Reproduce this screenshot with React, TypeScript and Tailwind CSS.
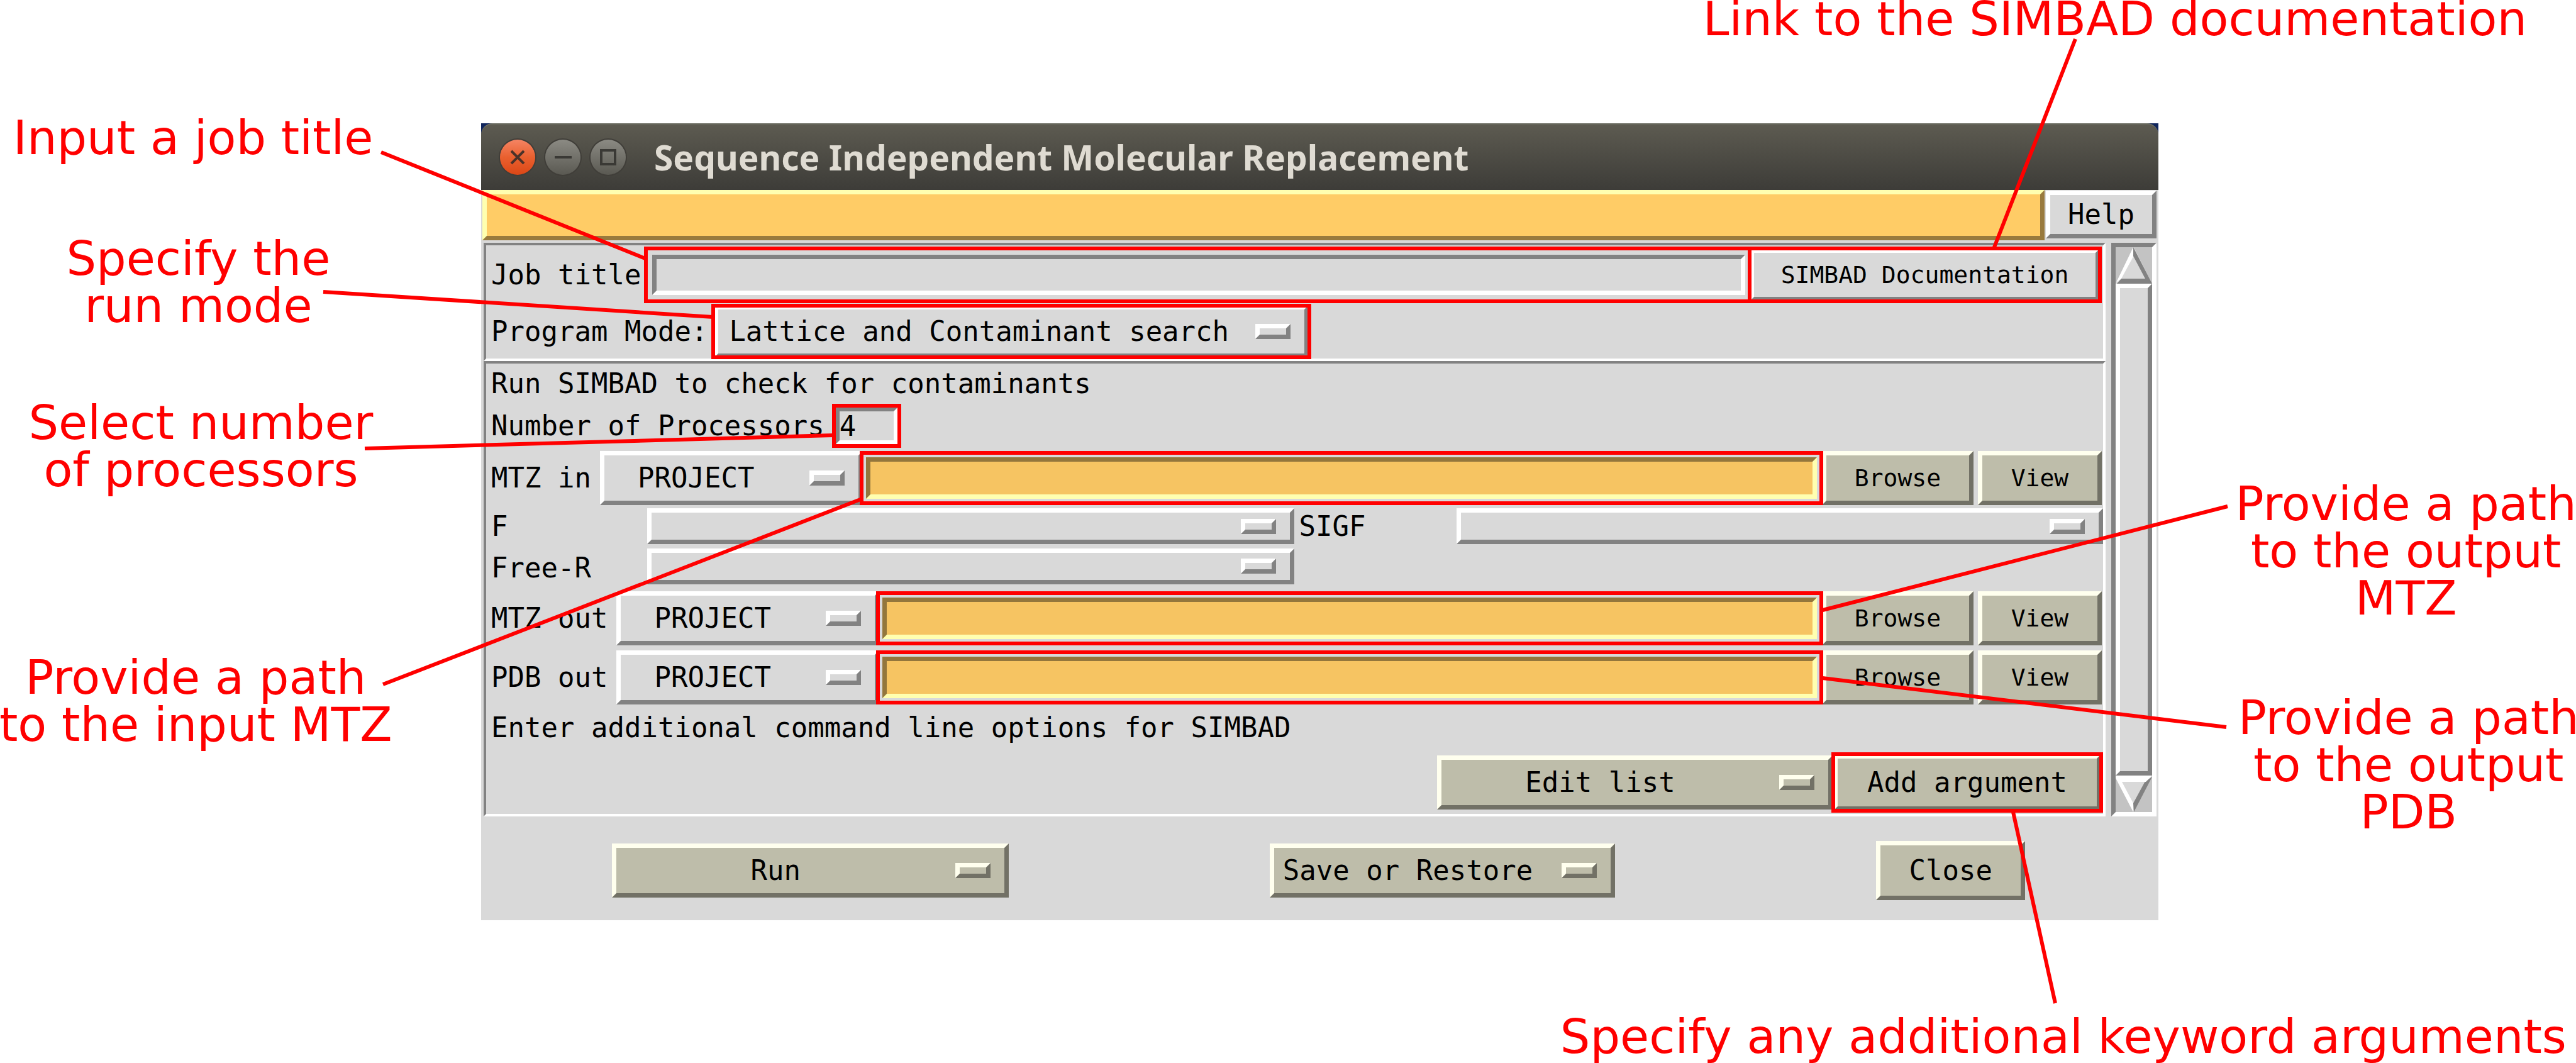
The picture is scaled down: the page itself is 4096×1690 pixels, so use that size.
import { useState, type ReactNode } from "react";

const RAISED = "border-[7px] border-t-white border-l-white border-r-[#828282] border-b-[#828282] bg-[#d9d9d9]";
const RAISED_KHAKI =
  "border-[7px] border-t-[#ffffee] border-l-[#ffffee] border-r-[#727166] border-b-[#727166] bg-[#bebdaa]";
const SUNKEN = "border-[7px] border-t-[#828282] border-l-[#828282] border-r-white border-b-white bg-[#d9d9d9]";
const SUNKEN_ORANGE =
  "border-[7px] border-t-[#93763c] border-l-[#93763c] border-r-[#ffffb0] border-b-[#ffffb0] bg-[#f6c462]";
const PANEL = "border-[4px] border-t-[#828282] border-l-[#828282] border-r-white border-b-white pl-[8px]";

function Highlight({ className }: { className: string }) {
  return <span aria-hidden="true" className={`pointer-events-none absolute border-[6px] border-[#ff0000] ${className}`} />;
}

function Notch({ khaki = false, className = "" }: { khaki?: boolean; className?: string }) {
  return (
    <span
      aria-hidden="true"
      className={`pointer-events-none block h-[24px] w-[56px] shrink-0 ${khaki ? RAISED_KHAKI : RAISED} ${className}`}
    />
  );
}

function OptionMenu({
  id,
  label,
  options,
  className,
  children,
}: {
  id: string;
  label?: string;
  options: string[];
  className: string;
  children?: ReactNode;
}) {
  return (
    <div className="relative flex items-center">
      <select id={id} aria-label={label} className={`w-full appearance-none rounded-none text-black outline-none ${RAISED} ${className}`}>
        {options.map((o) => (
          <option key={o}>{o}</option>
        ))}
      </select>
      <Notch className="absolute right-[29px]" />
      {children}
    </div>
  );
}

function MenuButton({ label, className }: { label: string; className: string }) {
  return (
    <button type="button" aria-haspopup="menu" className={`flex items-center pr-[22px] ${RAISED_KHAKI} ${className}`}>
      <span className="mr-[32px] flex-1 text-center whitespace-nowrap">{label}</span>
      <Notch khaki />
    </button>
  );
}

function FileRow({ id, label, className }: { id: string; label: string; className: string }) {
  const [path, setPath] = useState("");
  return (
    <div className={`flex items-center pr-[2px] ${className}`}>
      <label htmlFor={id} className="mr-[14px] whitespace-nowrap">
        {label}
      </label>
      <div className="w-[418px] shrink-0">
        <OptionMenu id={`${id}-dir`} label={`${label} directory`} options={["PROJECT"]} className="h-[86px] pl-[53px]" />
      </div>
      <div className="relative ml-[5px] flex-1">
        <input
          id={id}
          value={path}
          onChange={(e) => setPath(e.target.value)}
          className={`block h-[66px] w-full px-1 outline-none ${SUNKEN_ORANGE}`}
        />
        <Highlight className="-inset-[10px] z-10" />
      </div>
      <button type="button" className={`ml-[8px] h-[86px] w-[241px] text-[38px] ${RAISED_KHAKI}`}>
        Browse
      </button>
      <button type="button" className={`ml-[7px] h-[86px] w-[197px] text-[38px] ${RAISED_KHAKI}`}>
        View
      </button>
    </div>
  );
}

function TitleBar() {
  return (
    <header className="bg-[#10255c]">
      <div className="flex h-[106px] items-center rounded-t-[18px] border-t-2 border-[#6a6b60] bg-linear-to-b from-[#5d5b51] to-[#3d3c38] pl-[29px]">
        <div className="flex gap-[14px]">
          <button type="button" aria-label="Close window">
            <svg viewBox="0 0 58 58" className="size-[58px] overflow-visible">
              <defs>
                <linearGradient id="close" x1="0" y1="0" x2="0" y2="1">
                  <stop offset="0" stopColor="#f58463" />
                  <stop offset="0.5" stopColor="#e9602f" />
                  <stop offset="1" stopColor="#dc4716" />
                </linearGradient>
              </defs>
              <circle cx="29" cy="29" r="30" fill="#403e39" />
              <circle cx="29" cy="29" r="28" fill="url(#close)" />
              <path d="M19 19 L39 39 M39 19 L19 39" stroke="#4a3229" strokeWidth="4" />
            </svg>
          </button>
          <button type="button" aria-label="Minimize window">
            <svg viewBox="0 0 58 58" className="size-[58px] overflow-visible">
              <defs>
                <linearGradient id="grey" x1="0" y1="0" x2="0" y2="1">
                  <stop offset="0" stopColor="#8b8a83" />
                  <stop offset="1" stopColor="#5a5952" />
                </linearGradient>
              </defs>
              <circle cx="29" cy="29" r="30" fill="#403e39" />
              <circle cx="29" cy="29" r="28" fill="url(#grey)" />
              <path d="M16 29 H43" stroke="#3a3935" strokeWidth="4" />
            </svg>
          </button>
          <button type="button" aria-label="Maximize window">
            <svg viewBox="0 0 58 58" className="size-[58px] overflow-visible">
              <circle cx="29" cy="29" r="30" fill="#403e39" />
              <circle cx="29" cy="29" r="28" fill="url(#grey)" />
              <rect x="18" y="18" width="22" height="22" fill="none" stroke="#3a3935" strokeWidth="4" />
            </svg>
          </button>
        </div>
        <h1 className="ml-[44px] font-['Noto_Sans',sans-serif] text-[55px] leading-[70px] font-bold whitespace-nowrap text-[#dfdbd2]">
          Sequence Independent Molecular Replacement
        </h1>
      </div>
    </header>
  );
}

function ScrollBar() {
  return (
    <div className="flex w-[72px] shrink-0 flex-col border-[7px] border-t-[#828282] border-r-white border-b-white border-l-[#828282] bg-[#c3c3c3]">
      <button type="button" aria-label="Scroll up">
        <svg viewBox="0 0 58 58" className="block h-[58px] w-full">
          <path d="M29 0 L58 58 H0 Z" fill="#d9d9d9" />
          <path d="M28 0 L58 58 H2 L9 50 H47 L28 14 Z" fill="#828282" />
          <path d="M28 0 V15 L9 50 L1 56 Z" fill="#ffffff" />
        </svg>
      </button>
      <div className={`flex-1 ${RAISED}`} />
      <button type="button" aria-label="Scroll down">
        <svg viewBox="0 0 58 58" className="block h-[58px] w-full">
          <path d="M0 0 H58 L29 58 Z" fill="#d9d9d9" />
          <path d="M58 2 L29 58 L28 44 L47 9 Z" fill="#828282" />
          <path d="M58 0 H0 V4 L28 58 V44 L10 10 H48 Z" fill="#ffffff" />
        </svg>
      </button>
    </div>
  );
}

function TaskWindow() {
  const [title, setTitle] = useState("");
  const [processors, setProcessors] = useState("4");
  return (
    <section className="col-start-2 bg-[#d9d9d9] font-['DejaVu_Sans_Mono',monospace] text-[44px] leading-[52px] text-black">
      <TitleBar />
      <div className="flex items-start gap-[2px] pr-[3px] pb-[4px] pl-[2px]">
        <div className="h-[80px] flex-1 border-[7px] border-t-[#ffffb0] border-r-[#997a3d] border-b-[#997a3d] border-l-[#ffffb0] bg-[#ffcc66]" />
        <button type="button" className={`mt-[1px] h-[76px] w-[176px] ${RAISED}`}>
          Help
        </button>
      </div>

      <form className="flex gap-[9px] pr-[3px] pl-[4px]" onSubmit={(e) => e.preventDefault()}>
        <div className="min-w-0 flex-1">
          <div className={PANEL}>
            <div className="flex h-[93px] items-center pr-[5px]">
              <label htmlFor="job-title" className="mr-[18px] whitespace-nowrap">
                Job title
              </label>
              <div className="relative flex-1">
                <input
                  id="job-title"
                  value={title}
                  onChange={(e) => setTitle(e.target.value)}
                  className={`block h-[64px] w-full px-1 outline-none ${SUNKEN}`}
                />
                <Highlight className="-inset-[13px]" />
              </div>
              <div className="relative ml-[7px] w-[557px]">
                <button type="button" className={`block h-[84px] w-full text-[38px] whitespace-nowrap ${RAISED}`}>
                  SIMBAD Documentation
                </button>
                <Highlight className="-inset-[3px]" />
              </div>
            </div>
            <div className="flex h-[87px] items-center">
              <label htmlFor="mode" className="mr-[10px] whitespace-nowrap">
                Program Mode:
              </label>
              <div className="w-[946px]">
                <OptionMenu id="mode" options={["Lattice and Contaminant search"]} className="h-[84px] pl-[17px]">
                  <Highlight className="-inset-x-[4px] -inset-y-[2px]" />
                </OptionMenu>
              </div>
            </div>
          </div>

          <div className={PANEL}>
            <p className="flex h-[64px] items-center whitespace-nowrap">Run SIMBAD to check for contaminants</p>
            <div className="flex h-[70px] items-center">
              <label htmlFor="processors" className="mr-[17px] whitespace-nowrap">
                Number of Processors
              </label>
              <div className="relative w-[100px]">
                <input
                  id="processors"
                  value={processors}
                  onChange={(e) => setProcessors(e.target.value)}
                  className={`block h-[60px] w-full outline-none ${SUNKEN}`}
                />
                <Highlight className="-inset-[5px]" />
              </div>
            </div>
            <FileRow id="mtz-in" label="MTZ in" className="h-[96px]" />
            <div className="grid h-[60px] grid-cols-[248px_minmax(0,1fr)_258px_minmax(0,1fr)] items-start leading-[58px]">
              <label htmlFor="f">F</label>
              <OptionMenu id="f" options={[""]} className="h-[57px]" />
              <label htmlFor="sigf" className="pl-[8px]">
                SIGF
              </label>
              <OptionMenu id="sigf" options={[""]} className="h-[57px]" />
            </div>
            <div className="grid h-[64px] grid-cols-[248px_minmax(0,1fr)_258px_minmax(0,1fr)] items-center">
              <label htmlFor="free-r" className="pt-[6px]">
                Free-R
              </label>
              <OptionMenu id="free-r" options={[""]} className="h-[57px]" />
            </div>
            <FileRow id="mtz-out" label="MTZ out" className="h-[102px]" />
            <FileRow id="pdb-out" label="PDB out" className="h-[86px]" />
            <p className="flex h-[73px] items-center whitespace-nowrap">
              Enter additional command line options for SIMBAD
            </p>
            <div className="flex h-[101px] items-center justify-end gap-[1px] pr-[3px]">
              <MenuButton label="Edit list" className="h-[86px] w-[629px]" />
              <div className="relative w-[426px]">
                <button type="button" className={`block h-[90px] w-full whitespace-nowrap ${RAISED_KHAKI}`}>
                  Add argument
                </button>
                <Highlight className="-inset-[3px]" />
              </div>
            </div>
          </div>
        </div>
        <ScrollBar />
      </form>

      <footer className="flex h-[165px] items-center justify-around pt-[6px] pr-[4px]">
        <MenuButton label="Run" className="h-[86px] w-[631px]" />
        <MenuButton label="Save or Restore" className="h-[86px] w-[549px]" />
        <button type="button" className={`h-[94px] w-[237px] ${RAISED_KHAKI}`}>
          Close
        </button>
      </footer>
    </section>
  );
}

function Note({ className, lines }: { className: string; lines: string[] }) {
  return (
    <p className={`absolute -translate-x-1/2 text-center whitespace-nowrap ${className}`}>
      {lines.map((line) => (
        <span key={line} className="block">
          {line}
        </span>
      ))}
    </p>
  );
}

export default function App() {
  return (
    <main className="relative min-h-screen overflow-hidden bg-white">
      <div className="grid grid-cols-[765fr_2667fr_664fr] pt-[196px]">
        <TaskWindow />
      </div>

      <svg
        aria-hidden="true"
        viewBox="0 0 4096 1690"
        preserveAspectRatio="none"
        className="pointer-events-none absolute top-0 left-0 z-20 h-[1690px] w-full"
        fill="none"
        stroke="#ff0000"
        strokeWidth="6"
      >
        <path d="M606 242 L1026 411" />
        <path d="M514 464 L1134 504" />
        <path d="M580 713 L1325 692" />
        <path d="M609 1088 L1368 794" />
        <path d="M2898 970 L3542 805" />
        <path d="M2898 1078 L3540 1156" />
        <path d="M3300 62 L3171 393" />
        <path d="M3201 1291 L3268 1595" />
      </svg>

      <div className="pointer-events-none absolute top-0 left-0 z-20 h-[1690px] w-full font-['DejaVu_Sans',sans-serif] text-[75px] leading-[75px] text-[#ff0000]">
        <Note className="top-[-7px] left-[82.1%]" lines={["Link to the SIMBAD documentation"]} />
        <Note className="top-[182px] left-[7.5%]" lines={["Input a job title"]} />
        <Note className="top-[374px] left-[7.7%]" lines={["Specify the", "run mode"]} />
        <Note className="top-[635px] left-[7.8%]" lines={["Select number", "of processors"]} />
        <Note className="top-[1040px] left-[7.6%]" lines={["Provide a path", "to the input MTZ"]} />
        <Note className="top-[764px] left-[93.4%]" lines={["Provide a path", "to the output", "MTZ"]} />
        <Note className="top-[1104px] left-[93.5%]" lines={["Provide a path", "to the output", "PDB"]} />
        <Note className="top-[1611px] left-[80.1%]" lines={["Specify any additional keyword arguments"]} />
      </div>
    </main>
  );
}
